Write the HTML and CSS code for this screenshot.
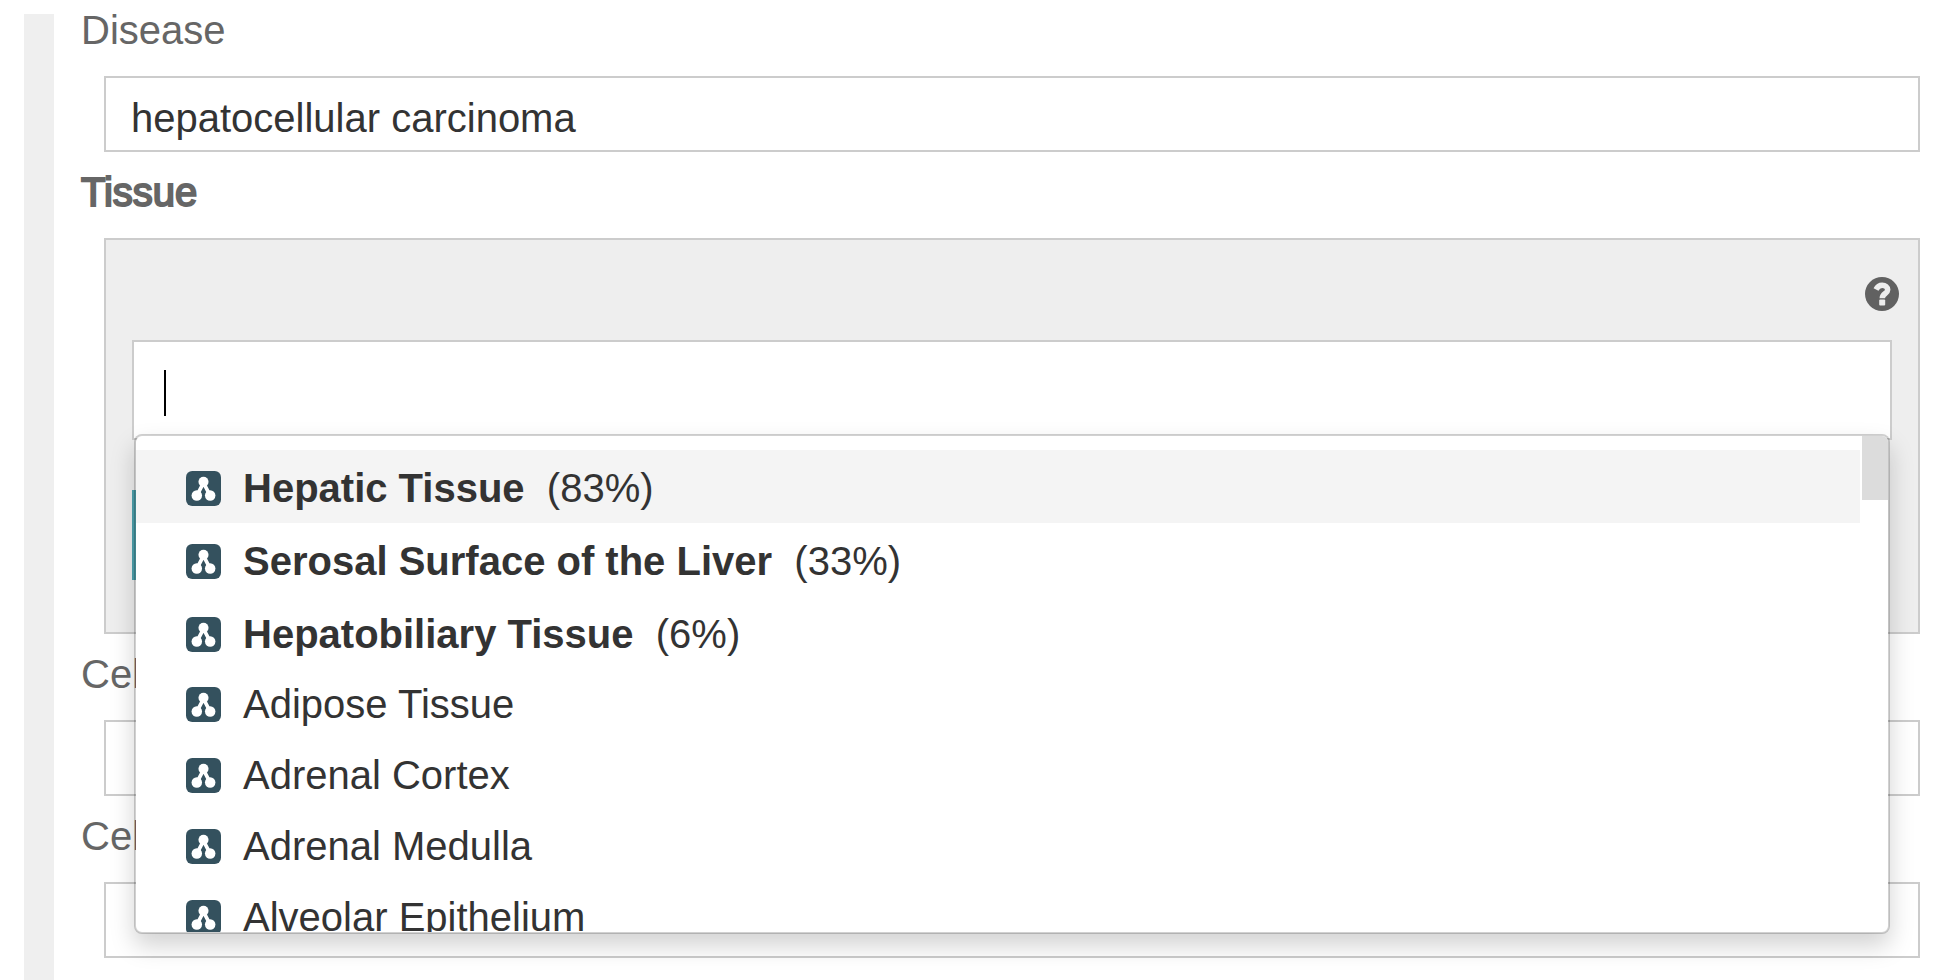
FILE: index.html
```html
<!DOCTYPE html>
<html lang="en">
<head>
<meta charset="utf-8">
<title>Sample attributes</title>
<meta name="viewport" content="width=device-width, initial-scale=1">
<link rel="stylesheet" href="styles.css">
</head>
<body>
<svg class="sprite" aria-hidden="true">
  <symbol id="ontology" viewBox="0 0 34 34">
    <rect width="34" height="34" rx="6" fill="#34515e"/>
    <path d="M10.500 24L16 13.500V10H18V13.500L23.500 24" fill="none" stroke="#fff" stroke-width="3.600"/>
    <circle cx="17" cy="10.500" r="4.900" fill="#fff"/>
    <circle cx="10.500" cy="23.800" r="5.100" fill="#fff"/>
    <circle cx="23.500" cy="23.800" r="5.100" fill="#fff"/>
  </symbol>
</svg>
<div class="page">
  <div class="rail"></div>
  <form class="form">
    <label class="label" for="disease">Disease</label>
    <input class="field" id="disease" type="text" value="hepatocellular carcinoma">

    <label class="label label-active" for="tissue">Tissue</label>
    <div class="editor">
      <div class="editor-head">
        <button class="help" type="button" aria-label="Help">
          <svg viewBox="0 0 34 34" width="34" height="34" aria-hidden="true">
            <circle cx="17" cy="17" r="17" fill="#616161"/>
            <path d="M11 12.500C12.500 9.500 14.500 8.300 17.200 8.300C20.500 8.300 22.700 10.200 22.700 12.700C22.700 16.500 17.300 16.600 17.300 21.200" fill="none" stroke="#eee" stroke-width="5.500"/>
            <rect x="14.200" y="22.500" width="6" height="6" rx="1" fill="#eee"/>
          </svg>
        </button>
      </div>
      <div class="editor-body">
        <div class="combo">
          <input class="search" id="tissue" type="text" autocomplete="off">
          <span class="caret"></span>
          <div class="menu">
            <ul class="options">
              <li class="option option-ranked option-current"><svg class="icon"><use href="#ontology"/></svg><span><strong>Hepatic Tissue</strong>&nbsp; (83%)</span></li>
              <li class="option option-ranked"><svg class="icon"><use href="#ontology"/></svg><span><strong>Serosal Surface of the Liver</strong>&nbsp; (33%)</span></li>
              <li class="option option-ranked"><svg class="icon"><use href="#ontology"/></svg><span><strong>Hepatobiliary Tissue</strong>&nbsp; (6%)</span></li>
              <li class="option"><svg class="icon"><use href="#ontology"/></svg><span>Adipose Tissue</span></li>
              <li class="option"><svg class="icon"><use href="#ontology"/></svg><span>Adrenal Cortex</span></li>
              <li class="option"><svg class="icon"><use href="#ontology"/></svg><span>Adrenal Medulla</span></li>
              <li class="option"><svg class="icon"><use href="#ontology"/></svg><span>Alveolar Epithelium</span></li>
            </ul>
            <div class="track"><div class="thumb"></div></div>
          </div>
        </div>
        <button class="apply" type="button" aria-label="Apply"></button>
      </div>
    </div>

    <label class="label" for="cell-type">Cell</label>
    <input class="field" id="cell-type" type="text">

    <label class="label" for="cell-line">Cell</label>
    <input class="field" id="cell-line" type="text">
  </form>
</div>
</body>
</html>
```
FILE: styles.css
```css
* {
  box-sizing: border-box;
}

body {
  margin: 0;
  background: #fff;
  color: #333;
  font-family: "Liberation Sans", Arial, sans-serif;
  font-size: 40px;
}

input,
button {
  font: inherit;
  color: inherit;
}

.sprite {
  display: none;
}

.page {
  display: flex;
  gap: 26px;
  min-height: 100vh;
  padding: 0 30px 0 24px;
}

.rail {
  flex: none;
  width: 30px;
  margin-top: 14px;
  background: #efefef;
}

.form {
  flex: 1;
  min-width: 0;
  display: flex;
  flex-direction: column;
}

.label {
  padding: 10px 1px 16px;
  line-height: 60px;
  color: #666;
}

.label:first-child {
  padding-top: 0;
}

.label-active {
  -webkit-text-stroke: 2px #666;
}

.field {
  height: 76px;
  margin: 0 0 0 24px;
  padding: 8px 25px 0;
  border: 2px solid #ccc;
  background: #fff;
  outline: none;
}

.editor {
  margin-left: 24px;
  border: 2px solid #ccc;
  background: #eee;
}

.editor-head {
  display: flex;
  justify-content: flex-end;
  padding: 37px 19px 29px;
}

.help {
  display: flex;
  padding: 0;
  border: 0;
  background: none;
}

.editor-body {
  display: flex;
  flex-direction: column;
  gap: 50px;
  padding: 0 26px 52px;
}

.combo {
  position: relative;
  display: flex;
}

.search {
  flex: 1;
  min-width: 0;
  height: 100px;
  padding: 0 30px;
  border: 2px solid #ccc;
  background: #fff;
  outline: none;
}

.caret {
  position: absolute;
  top: 30px;
  left: 32px;
  width: 2px;
  height: 46px;
  background: #000;
}

.menu {
  position: absolute;
  z-index: 1;
  top: 94px;
  left: 2px;
  right: 2px;
  display: flex;
  gap: 2px;
  height: 500px;
  overflow: hidden;
  border: 2px solid rgba(0, 0, 0, 0.18);
  border-radius: 8px;
  background: #fff;
  background-clip: padding-box;
  box-shadow: 0 12px 24px rgba(0, 0, 0, 0.175);
}

.options {
  flex: 1;
  margin: 0;
  padding: 14px 0 0;
  list-style: none;
}

.option {
  display: flex;
  align-items: center;
  gap: 22px;
  padding-left: 50px;
  line-height: 71px;
  white-space: nowrap;
}

.option-ranked {
  padding-top: 3px;
  line-height: 70px;
}

.option-current {
  background: #f4f4f4;
}

.icon {
  flex: none;
  width: 35px;
  height: 35px;
}

.track {
  width: 26px;
}

.thumb {
  height: 64px;
  background: #dcdcdc;
}

.apply {
  align-self: flex-start;
  width: 160px;
  height: 90px;
  border: 0;
  background: #4da1ad;
}
```
